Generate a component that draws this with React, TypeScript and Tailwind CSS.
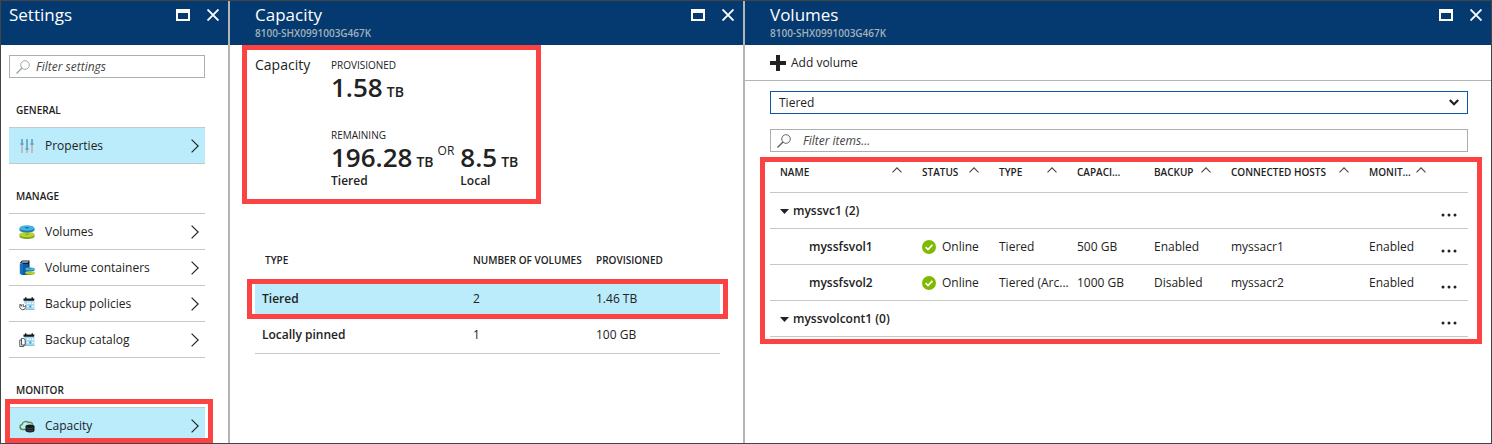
import type { ReactNode } from "react";

function MaximizeIcon() {
  return (
    <svg viewBox="0 0 14 12" className="h-3 w-3.5" aria-hidden="true">
      <path fill="#fff" fillRule="evenodd" d="M0 0h14v12H0zM2 4v6h10V4z" />
    </svg>
  );
}

function CloseIcon() {
  return (
    <svg viewBox="0 0 12 12" className="size-3" aria-hidden="true">
      <path d="M.5.5l11 11M11.500.5L.5 11.500" stroke="#fff" strokeWidth="1.900" />
    </svg>
  );
}

function SearchIcon({ className }: { className: string }) {
  return (
    <svg viewBox="0 0 14 14" className={className} fill="none" aria-hidden="true">
      <circle cx="9" cy="5" r="4.300" stroke="currentColor" strokeWidth=".9" />
      <path d="M6 8L.5 13.500" stroke="currentColor" strokeWidth="1.200" />
    </svg>
  );
}

function ChevronRight() {
  return (
    <svg viewBox="0 0 8 14" className="h-3.5 w-2" fill="none" aria-hidden="true">
      <path d="M.6.6L7.200 7 .6 13.400" stroke="#222" strokeWidth="1.200" />
    </svg>
  );
}

function SortCaret() {
  return (
    <svg viewBox="0 0 10 6" className="h-1.5 w-2.5 shrink-0" fill="none" aria-hidden="true">
      <path d="M.5 5.400L5 .9l4.500 4.500" stroke="#444" strokeWidth="1.100" />
    </svg>
  );
}

function PropertiesIcon() {
  return (
    <svg viewBox="0 0 16 16" className="size-4" aria-hidden="true">
      <path fill="#b3bfc4" d="M2 7h2v8H2zM7 11h2v4H7zM12 7h2v8h-2z" />
      <path fill="#6aaed3" d="M2 1h2v4H2zM7 1h2v9H7zM12 1h2v4h-2z" />
      <path fill="#8899a3" d="M1.500 5h3v2h-3zM6.500 10h3v2h-3zM11.500 5h3v2h-3z" />
    </svg>
  );
}

function Disks() {
  return (
    <>
      <path fill="#7fa81c" d="M.5 10.500v2C.5 14 3.800 15 8 15s7.500-1 7.500-2.500v-2z" />
      <ellipse cx="8" cy="10.500" rx="7.500" ry="2.700" fill="#b8d432" />
      <ellipse cx="8" cy="10.300" rx="2.200" ry=".7" fill="#8cb11d" />
      <path fill="#1c7bb5" d="M.5 4v2C.5 7.500 3.800 8.500 8 8.500s7.500-1 7.500-2.500V4z" />
      <ellipse cx="8" cy="4" rx="7.500" ry="2.800" fill="#45b3dd" />
      <ellipse cx="8" cy="3.800" rx="2.400" ry=".8" fill="#1671a9" />
    </>
  );
}

function VolumesIcon() {
  return (
    <svg viewBox="0 0 16 16" className="size-4" aria-hidden="true">
      <Disks />
    </svg>
  );
}

function ContainersIcon() {
  return (
    <svg viewBox="0 0 16 16" className="size-4" aria-hidden="true">
      <path fill="#0b1c30" d="M.8 3L3 .6h7.500V12H4V4z" />
      <path fill="#1272bf" d="M.8 3.500H4V15H2.500L.8 13.500z" />
      <path fill="#0d5aa7" d="M4 4h5.500v11H4z" />
      <path fill="#eef5f9" d="M2.300 2.400l1.200-1h6l-.8 1z" />
      <svg x="6" y="6.500" width="10" height="9" viewBox="0 0 16 16" preserveAspectRatio="none">
        <Disks />
      </svg>
    </svg>
  );
}

function Calendar() {
  return (
    <>
      <path fill="#a4d8f0" d="M5 4.500h10.500v9H5z" />
      <path fill="#15181a" d="M4.500 2.500h11l-.5 2.200H4.500zM6 1.200h1.400v2H6zM12.500 1.200h1.400v2h-1.400z" />
      <path fill="#fff" d="M8 6.500h1.500V8H8zM10.500 6.500H12V8h-1.500zM13 6.500h1.500V8H13zM8 9.800h1.500v1.500H8zM13 9.800h1.500v1.500H13z" />
      <path fill="#3c96c6" d="M10.500 9.600H12v1.800h-1.500zM5 13h10.500v.6H5z" />
    </>
  );
}

function PoliciesIcon() {
  return (
    <svg viewBox="0 0 16 16" className="size-4" aria-hidden="true">
      <Calendar />
      <circle cx="4" cy="10.500" r="3.600" fill="#fff" />
      <path d="M1.200 9A3.100 3.100 0 1 0 6.500 9M4.200 8v2.600h1.600M.4 8.700h2v1.800" fill="none" stroke="#444" strokeWidth=".9" />
    </svg>
  );
}

function CatalogIcon() {
  return (
    <svg viewBox="0 0 16 16" className="size-4" aria-hidden="true">
      <Calendar />
      <path d="M2.500 6.500h2.200L6.200 8v5H2.500z" fill="#fff" stroke="#444" strokeWidth=".9" />
      <path d="M2.500 8H.8v6.500h4V13" fill="none" stroke="#444" strokeWidth=".9" />
    </svg>
  );
}

function CapacityIcon() {
  return (
    <svg viewBox="0 0 16 16" className="size-4" fill="none" aria-hidden="true">
      <path d="M7 11.500H3.500A2.600 2.600 0 0 1 3 6.400C3.800 3.500 7.500 2.500 9.500 4.600c2-.8 3.700.2 4.200 2" stroke="#5c8f4c" strokeWidth="1.500" />
      <path fill="#151a1c" d="M6.500 8.500c0-1.200 2-1.900 4.500-1.900s4.500.7 4.500 1.900v4c0 1.200-2 1.900-4.500 1.900s-4.500-.7-4.500-1.900z" />
      <path d="M7.500 10c1.500.8 5 .8 6.500 0M8 12.300c1.500.7 4.500.7 6 0" stroke="#63717a" strokeWidth=".6" />
    </svg>
  );
}

function StatusOk() {
  return (
    <svg viewBox="0 0 14 14" className="size-3.5 shrink-0" aria-hidden="true">
      <circle cx="7" cy="7" r="7" fill="#7fba00" />
      <path d="M3.600 7.200L6 9.500l4.400-4.700" stroke="#fff" strokeWidth="1.700" fill="none" />
    </svg>
  );
}

function Header({ title, subtitle, pad }: { title: string; subtitle?: string; pad: string }) {
  return (
    <header className={`flex h-11 items-start justify-between bg-[#053a70] pr-1 ${pad}`}>
      <div className="pt-0.5">
        <h1 className="text-[17px] leading-6 text-white">{title}</h1>
        {subtitle && <p className="text-[10px] leading-3 font-semibold text-[#a3b1b8]">{subtitle}</p>}
      </div>
      <div className="flex gap-2 pt-[3px]">
        <button type="button" aria-label={`Maximize ${title}`} className="flex size-[22px] items-center justify-center">
          <MaximizeIcon />
        </button>
        <button type="button" aria-label={`Close ${title}`} className="flex size-[22px] items-center justify-center">
          <CloseIcon />
        </button>
      </div>
    </header>
  );
}

function Item({ icon, label, active }: { icon: ReactNode; label: string; active?: boolean }) {
  return (
    <li>
      <a
        href="#"
        className={`flex h-[35px] items-center justify-between pr-1.5 pl-2.5 ${active ? "bg-[#baecfb]" : ""}`}
      >
        <span className="flex items-center gap-2.5">
          {icon}
          {label}
        </span>
        <ChevronRight />
      </a>
    </li>
  );
}

function Section({ title, children }: { title: string; children: ReactNode }) {
  return (
    <section>
      <h2 className="px-[7px] pt-6 pb-[9px] text-[10px] leading-4 font-semibold">{title}</h2>
      {children}
    </section>
  );
}

function Settings() {
  return (
    <div className="min-w-0">
      <Header title="Settings" pad="pl-2" />
      <div className="pt-2.5 pr-[23px] pl-2">
        <label className="flex h-[23px] items-center gap-1.5 border border-[#a9b0b0] px-1.5">
          <SearchIcon className="size-3.5 shrink-0 text-[#94a295]" />
          <input
            type="text"
            aria-label="Filter settings"
            placeholder="Filter settings"
            className="w-full min-w-0 italic outline-none placeholder:text-[#444]"
          />
        </label>
        <Section title="GENERAL">
          <ul className="border-y border-[#c3c8c8]">
            <Item icon={<PropertiesIcon />} label="Properties" active />
          </ul>
        </Section>
        <Section title="MANAGE">
          <ul className="divide-y divide-[#c3c8c8] border-y border-[#c3c8c8]">
            <Item icon={<VolumesIcon />} label="Volumes" />
            <Item icon={<ContainersIcon />} label="Volume containers" />
            <Item icon={<PoliciesIcon />} label="Backup policies" />
            <Item icon={<CatalogIcon />} label="Backup catalog" />
          </ul>
        </Section>
        <Section title="MONITOR">
          <div className="relative">
            <ul className="border-t border-[#c3c8c8]">
              <Item icon={<CapacityIcon />} label="Capacity" active />
            </ul>
            <div className="pointer-events-none absolute -top-2 -right-2 bottom-0 -left-1 border-5 border-[#fb4343]" />
          </div>
        </Section>
      </div>
    </div>
  );
}

function Amount({ value, unit }: { value: string; unit: string }) {
  return (
    <p className="flex items-baseline gap-1 text-[26px] leading-7 font-semibold whitespace-nowrap">
      {value}
      <span className="text-[14px] leading-4">{unit}</span>
    </p>
  );
}

function Capacity() {
  return (
    <div className="min-w-0 border-l-2 border-[#b1b6b4]">
      <Header title="Capacity" subtitle="8100-SHX0991003G467K" pad="pl-[25px]" />
      <div className="pr-[23px] pl-[25px]">
        <section className="-ml-[13px] flex w-[299px] border-5 border-[#fb4343] pt-[3px] pb-2.5 pl-2">
          <h2 className="w-[76px] text-[14px] leading-6">Capacity</h2>
          <div>
            <h3 className="pt-1 text-[10px] leading-4 font-medium">PROVISIONED</h3>
            <Amount value="1.58" unit="TB" />
            <h3 className="pt-[26px] text-[10px] leading-4 font-medium">REMAINING</h3>
            <div className="flex gap-1">
              <div>
                <Amount value="196.28" unit="TB" />
                <p className="pt-0.5 leading-4 font-semibold">Tiered</p>
              </div>
              <span className="leading-4">OR</span>
              <div className="pl-0.5">
                <Amount value="8.5" unit="TB" />
                <p className="pt-0.5 leading-4 font-semibold">Local</p>
              </div>
            </div>
          </div>
        </section>
        <table className="mt-9 w-full table-fixed text-left">
          <colgroup>
            <col className="w-[211px]" />
            <col className="w-[123px]" />
            <col className="w-[131px]" />
          </colgroup>
          <thead>
            <tr className="h-[41px] text-[10px] whitespace-nowrap">
              <th className="pl-2.5 font-semibold">TYPE</th>
              <th className="pl-[7px] font-semibold">NUMBER OF VOLUMES</th>
              <th className="pl-[7px] font-semibold">PROVISIONED</th>
            </tr>
          </thead>
          <tbody>
            <tr className="relative h-9 bg-[#baecfb]">
              <th scope="row" className="pl-[7px] font-semibold">
                Tiered
                <span className="pointer-events-none absolute -inset-x-2 -inset-y-0.5 border-5 border-[#fb4343]" />
              </th>
              <td className="pl-[7px]">2</td>
              <td className="pl-[7px]">1.46 TB</td>
            </tr>
            <tr className="h-9 border-b border-[#c3c8c8]">
              <th scope="row" className="pl-[7px] font-semibold">Locally pinned</th>
              <td className="pl-[7px]">1</td>
              <td className="pl-[7px]">100 GB</td>
            </tr>
          </tbody>
        </table>
      </div>
    </div>
  );
}

const columns = [
  { label: "NAME", sort: true },
  { label: "STATUS", sort: true },
  { label: "TYPE", sort: true },
  { label: "CAPACI...", sort: false },
  { label: "BACKUP", sort: true },
  { label: "CONNECTED HOSTS", sort: true },
  { label: "MONIT...", sort: true },
];

function MoreCell({ name }: { name: string }) {
  return (
    <td className="pt-2.5 pl-[5px]">
      <button type="button" aria-label={`More actions for ${name}`} className="flex h-4 items-center">
        <svg viewBox="0 0 16 4" className="h-1 w-4" fill="#222" aria-hidden="true">
          <circle cx="2" cy="2" r="1.500" />
          <circle cx="8" cy="2" r="1.500" />
          <circle cx="14" cy="2" r="1.500" />
        </svg>
      </button>
    </td>
  );
}

function GroupRow({ name, count }: { name: string; count: number }) {
  return (
    <tr className="h-9 border-b border-[#c3c8c8]">
      <th scope="rowgroup" colSpan={7} className="pt-0.5 pl-2.5 font-semibold">
        <button type="button" className="flex items-center gap-1">
          <svg viewBox="0 0 9 5" className="h-[5px] w-[9px]" fill="#222" aria-hidden="true">
            <path d="M0 0h9L4.500 5z" />
          </svg>
          {name} ({count})
        </button>
      </th>
      <MoreCell name={name} />
    </tr>
  );
}

function VolumeRow({ name, cells }: { name: string; cells: string[] }) {
  return (
    <tr className="h-9 border-b border-[#c3c8c8] whitespace-nowrap">
      <th scope="row" className="pt-0.5 pl-[39px] font-semibold">{name}</th>
      <td className="pt-0.5 pl-2.5">
        <span className="flex items-center gap-1.5">
          <StatusOk />
          Online
        </span>
      </td>
      {cells.map((cell, i) => (
        <td key={i} className="pt-0.5 pl-2.5">{cell}</td>
      ))}
      <MoreCell name={name} />
    </tr>
  );
}

function Volumes() {
  return (
    <div className="min-w-0 border-l-2 border-[#b1b6b4]">
      <Header title="Volumes" subtitle="8100-SHX0991003G467K" pad="pl-[25px]" />
      <div className="flex h-9 items-center border-b border-[#b1b6b4] pl-[25px]">
        <button type="button" className="flex items-center gap-[5px]">
          <svg viewBox="0 0 16 16" className="size-4" aria-hidden="true">
            <path d="M6 0h4v6h6v4h-6v6H6v-6H0V6h6z" fill="#222" />
          </svg>
          Add volume
        </button>
      </div>
      <div className="pt-2.5 pr-[9px] pl-[15px]">
        <div className="mr-3.5 ml-2.5">
          <div className="relative">
            <select
              aria-label="Volume type"
              className="block h-[23px] w-full appearance-none border border-[#0f55a8] bg-white px-2 outline-none"
            >
              <option>Tiered</option>
            </select>
            <svg viewBox="0 0 10 7" className="pointer-events-none absolute top-2 right-[9px] h-[7px] w-2.5" fill="none" aria-hidden="true">
              <path d="M.8 1L5 5.200 9.200 1" stroke="#222" strokeWidth="2.200" />
            </svg>
          </div>
          <label className="mt-[15px] flex h-[23px] items-center gap-3 border border-[#a9b0b0] px-1.5">
            <SearchIcon className="size-3.5 shrink-0 text-[#555]" />
            <input
              type="text"
              aria-label="Filter items"
              placeholder="Filter items..."
              className="w-full min-w-0 italic outline-none placeholder:text-[#444]"
            />
          </label>
        </div>
        <div className="mt-[5px] border-5 border-[#fb4343] pr-[9px] pb-0.5 pl-[5px]">
          <table className="w-full table-fixed text-left">
            <colgroup>
              <col className="w-[142px]" />
              <col className="w-[77px]" />
              <col className="w-[78px]" />
              <col className="w-[77px]" />
              <col className="w-[77px]" />
              <col className="w-[138px]" />
              <col className="w-[77px]" />
              <col className="w-[32px]" />
            </colgroup>
            <thead>
              <tr className="h-[30px] border-b border-[#c3c8c8] text-[10px] whitespace-nowrap">
                {columns.map((c) => (
                  <th key={c.label} className="pb-2 pl-2.5 font-semibold">
                    <div className="flex items-start justify-between pr-2.5">
                      {c.label}
                      {c.sort && (
                        <span className="pt-0.5">
                          <SortCaret />
                        </span>
                      )}
                    </div>
                  </th>
                ))}
                <td />
              </tr>
            </thead>
            <tbody>
              <GroupRow name="myssvc1" count={2} />
              <VolumeRow name="myssfsvol1" cells={["Tiered", "500 GB", "Enabled", "myssacr1", "Enabled"]} />
              <VolumeRow name="myssfsvol2" cells={["Tiered (Arc...", "1000 GB", "Disabled", "myssacr2", "Enabled"]} />
              <GroupRow name="myssvolcont1" count={0} />
            </tbody>
          </table>
        </div>
      </div>
    </div>
  );
}

export default function App() {
  return (
    <main className="grid min-h-screen grid-cols-[227px_minmax(0,515fr)_minmax(0,748fr)] border border-[#444] bg-white font-['Open_Sans','Noto_Sans',sans-serif] text-[12px] text-[#222]">
      <Settings />
      <Capacity />
      <Volumes />
    </main>
  );
}
